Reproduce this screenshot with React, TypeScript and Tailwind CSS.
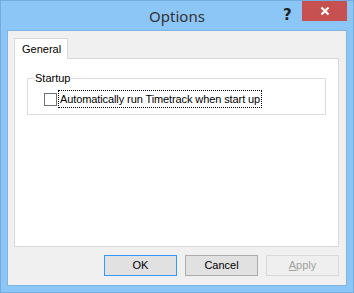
import React from "react";

export default function App() {
  const ui = { fontFamily: '"Liberation Sans", Arial, sans-serif' };
  return (
    <div
      className="w-[354px] h-[293px] bg-[#8cc6f6] border border-[#74acdf] flex flex-col box-border"
      style={ui}
    >
      <div className="h-[29px] relative flex items-center justify-center shrink-0">
        <span
          className="text-[15px] text-[#333] mt-[2px]"
          style={{ fontFamily: '"Noto Sans", "Open Sans", sans-serif' }}
        >
          Options
        </span>
        <span className="absolute left-[282px] top-[3px] text-[15px] font-bold text-[#222]" style={{ fontFamily: '"DejaVu Sans", sans-serif' }}>?</span>
        <div className="absolute left-[301px] top-0 w-[45px] h-[20px] bg-[#c75050] flex items-center justify-center">
          <svg width="10" height="10" viewBox="0 0 10 10">
            <path d="M1.5 1.5 L8.5 8.5 M8.5 1.5 L1.5 8.5" stroke="#fff" strokeWidth="2.2" />
          </svg>
        </div>
      </div>
      <div className="mx-[6px] mb-[6px] flex-1 bg-[#f0f0f0] border border-[#80b4e4] flex flex-col pl-[6px] pr-[7px] pt-[7px] pb-[9px]">
        <div className="flex">
          <div className="w-[54px] h-[21px] bg-white border border-[#d9d9d9] border-b-0 text-[11px] text-black flex items-center pl-[7px] relative z-10 -mb-px">
            General
          </div>
        </div>
        <div className="flex-1 bg-white border border-[#d9d9d9] pl-[12px] pr-[12px] pt-[13px]">
          <div className="relative border border-[#dcdcdc] h-[37px] mt-[6px]">
            <span className="absolute left-[6px] -top-[8px] bg-white px-[1px] text-[11px] text-black leading-[14px]">
              Startup
            </span>
            <div className="flex items-center mt-[11px] ml-[16px]">
              <div className="w-[13px] h-[13px] border border-[#707070] bg-white shrink-0"></div>
              <span className="ml-[1px] text-[11px] leading-[14px] text-black border border-dotted border-black px-[1px] py-[1px] tracking-[-0.1px]">
                Automatically run Timetrack when start up
              </span>
            </div>
          </div>
        </div>
        <div className="flex justify-end gap-[8px] mt-[8px]">
          <button className="w-[73px] h-[21px] bg-[#e1e1e1] border border-[#3399ff] text-[11px] text-black flex items-center justify-center">
            OK
          </button>
          <button className="w-[73px] h-[21px] bg-[#e1e1e1] border border-[#adadad] text-[11px] text-black flex items-center justify-center">
            Cancel
          </button>
          <button className="w-[73px] h-[21px] bg-[#efefef] border border-[#d9d9d9] text-[11px] text-[#a0a0a0] flex items-center justify-center">
            <span className="underline">A</span>pply
          </button>
        </div>
      </div>
    </div>
  );
}
